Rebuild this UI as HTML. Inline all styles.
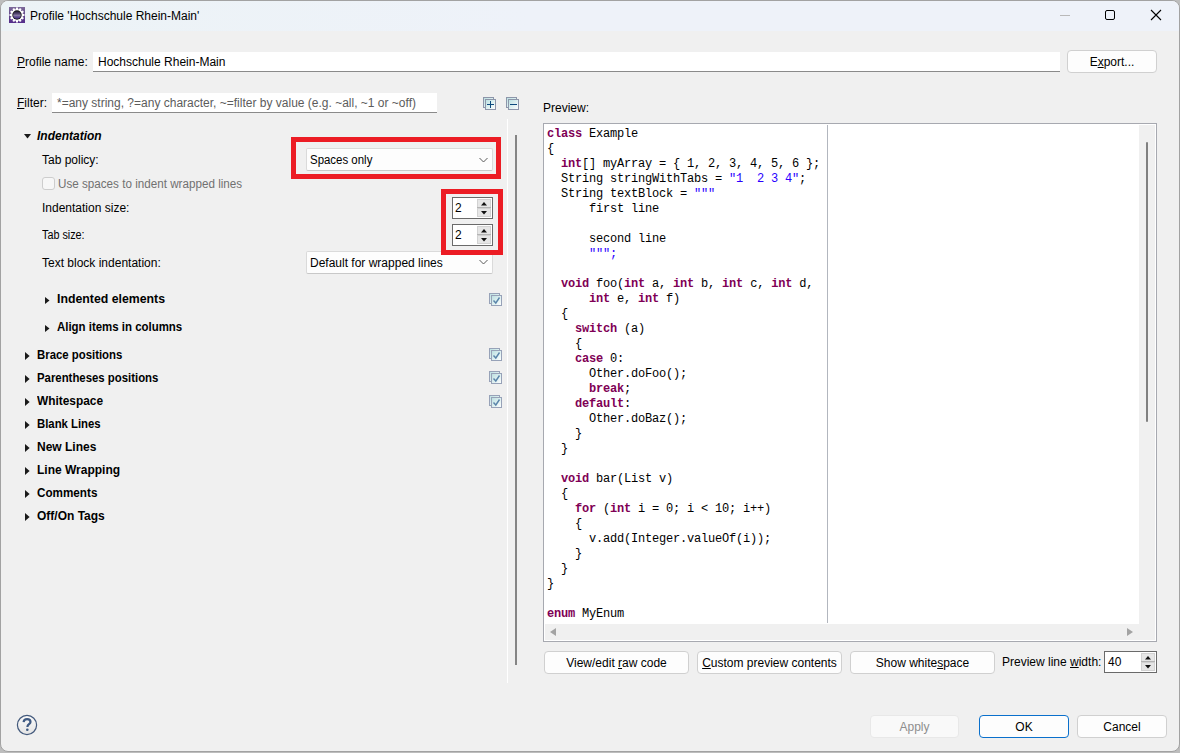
<!DOCTYPE html>
<html><head><meta charset="utf-8">
<style>
*{margin:0;padding:0;box-sizing:border-box}
html,body{width:1180px;height:753px;overflow:hidden;background:#bdbdbd}
body{position:relative;font-family:"Liberation Sans",sans-serif;font-size:12px;color:#000}
.a{position:absolute}
.win{left:0;top:0;width:1180px;height:752px;border:1px solid #a2a2a2;border-radius:8px;background:#f0f0f0;overflow:hidden}
.title{left:0;top:0;width:1178px;height:30px;background:linear-gradient(90deg,#ecf3f6 0%,#eef2f9 45%,#eef2f9 100%)}
.t{position:absolute;white-space:pre;line-height:14px}
.b{font-weight:bold}
.field{position:absolute;background:#fff;border-bottom:1px solid #8a8a8a}
.btn{position:absolute;background:#fdfdfd;border:1px solid #d0d0d0;border-radius:4px;text-align:center;line-height:21px;padding-top:1px}
.combo{position:absolute;background:#fdfdfd;border:1px solid #dadada;border-bottom-color:#c8c8c8;border-radius:2px}
.spin{position:absolute;background:#fff;border:1px solid #6a6a6a}
.red{position:absolute;border:5px solid #ec1c24}
.code{position:absolute;left:547px;top:127px;font-family:"Liberation Mono",monospace;font-size:12px;letter-spacing:-0.2px;line-height:15px;white-space:pre;color:#000}
.k{color:#7f0055;font-weight:bold}
.s{color:#2a00ff}
u{text-decoration:underline;text-decoration-thickness:1px;text-underline-offset:1px}
</style></head><body>
<div class="a win">
  <div class="a title"></div>
</div>

<!-- title -->
<svg class="a" style="left:9px;top:7px" width="16" height="16" viewBox="0 0 16 16">
  <defs><linearGradient id="pg" x1="0" y1="0" x2="0" y2="1"><stop offset="0" stop-color="#7d6a9a"/><stop offset="0.5" stop-color="#5f4488"/><stop offset="1" stop-color="#552d8c"/></linearGradient>
  <linearGradient id="ig" x1="0" y1="0" x2="0" y2="1"><stop offset="0" stop-color="#241c36"/><stop offset="0.35" stop-color="#564872"/><stop offset="0.55" stop-color="#8a7ca4"/><stop offset="0.75" stop-color="#5c4a90"/><stop offset="1" stop-color="#4a3088"/></linearGradient></defs>
  <rect x="0" y="0" width="16" height="16" fill="url(#pg)"/>
  <polygon fill="#fff" points="6.77,2.23 7.09,0.56 8.91,0.56 9.23,2.23 9.82,2.39 10.93,1.10 12.51,2.01 11.95,3.62 12.38,4.05 13.99,3.49 14.90,5.07 13.61,6.18 13.77,6.77 15.44,7.09 15.44,8.91 13.77,9.23 13.61,9.82 14.90,10.93 13.99,12.51 12.38,11.95 11.95,12.38 12.51,13.99 10.93,14.90 9.82,13.61 9.23,13.77 8.91,15.44 7.09,15.44 6.77,13.77 6.18,13.61 5.07,14.90 3.49,13.99 4.05,12.38 3.62,11.95 2.01,12.51 1.10,10.93 2.39,9.82 2.23,9.23 0.56,8.91 0.56,7.09 2.23,6.77 2.39,6.18 1.10,5.07 2.01,3.49 3.62,4.05 4.05,3.62 3.49,2.01 5.07,1.10 6.18,2.39"/>
  <circle cx="8" cy="8" r="4.7" fill="#161616"/>
  <circle cx="8" cy="8" r="3.8" fill="url(#ig)"/>
</svg>
<div class="t" style="left:30px;top:9px">Profile 'Hochschule Rhein-Main'</div>
<div class="a" style="left:1060px;top:15px;width:10px;height:1px;background:#b9b9b9"></div>
<div class="a" style="left:1105px;top:10px;width:10px;height:10px;border:1px solid #000;border-radius:2px"></div>
<svg class="a" style="left:1150px;top:9px" width="12" height="12" viewBox="0 0 12 12"><path d="M1 1L11 11M11 1L1 11" stroke="#000" stroke-width="1.1"/></svg>

<!-- profile name -->
<div class="t" style="left:17px;top:55px"><u>P</u>rofile name:</div>
<div class="field" style="left:93px;top:52px;width:967px;height:20px"></div>
<div class="t" style="left:98px;top:55px">Hochschule Rhein-Main</div>
<div class="btn" style="left:1067px;top:50px;width:90px;height:23px">E<u>x</u>port...</div>

<!-- filter -->
<div class="t" style="left:17px;top:96px"><u>F</u>ilter:</div>
<div class="field" style="left:52px;top:93px;width:385px;height:20px"></div>
<div class="t" style="left:57px;top:96px;color:#5c5c5c">*=any string, ?=any character, ~=filter by value (e.g. ~all, ~1 or ~off)</div>

<svg class="a" style="left:483px;top:97px" width="14" height="14" viewBox="0 0 14 14">
  <defs><linearGradient id="cg" x1="0" y1="0" x2="1" y2="1"><stop offset="0" stop-color="#b9dfe0"/><stop offset="1" stop-color="#ffffff"/></linearGradient></defs>
  <rect x="0.5" y="0.5" width="10" height="10" fill="url(#cg)" stroke="#8d96aa"/>
  <rect x="2.5" y="2.5" width="10" height="10" fill="url(#cg)" stroke="#8d96aa"/>
  <path d="M4 7.5h7M7.5 4v7" stroke="#0d4a7e" stroke-width="1"/>
</svg>
<svg class="a" style="left:506px;top:97px" width="14" height="14" viewBox="0 0 14 14">
  <rect x="0.5" y="0.5" width="10" height="10" fill="url(#cg)" stroke="#8d96aa"/>
  <rect x="2.5" y="2.5" width="10" height="10" fill="url(#cg)" stroke="#8d96aa"/>
  <path d="M4 7.5h7" stroke="#0d4a7e" stroke-width="1"/>
</svg>

<!-- left tree -->
<svg class="a" style="left:24px;top:134px" width="8" height="5"><path d="M0 0H7L3.5 4.5Z" fill="#1a1a1a"/></svg>
<div class="t b" style="left:37px;top:129px;font-style:italic">Indentation</div>
<div class="t" style="left:42px;top:153px">Tab policy:</div>
<div class="a" style="left:42px;top:177px;width:13px;height:13px;border:1px solid #cdcdcd;border-radius:3px;background:#f7f7f7"></div>
<div class="t" style="left:58px;top:177px;color:#717171;transform:scaleX(0.972);transform-origin:0 0">Use spaces to indent wrapped lines</div>
<div class="t" style="left:42px;top:201px">Indentation size:</div>
<div class="t" style="left:42px;top:228px;transform:scaleX(0.9);transform-origin:0 0">Tab size:</div>
<div class="t" style="left:42px;top:256px">Text block indentation:</div>

<div class="combo" style="left:306px;top:148px;width:187px;height:23px"></div>
<div class="t" style="left:310px;top:153px;transform:scaleX(0.954);transform-origin:0 0">Spaces only</div>
<svg class="a" style="left:479px;top:157px" width="10" height="7"><path d="M0.5 1L4.5 5L8.5 1" stroke="#5a5a5a" fill="none"/></svg>

<div class="spin" style="left:452px;top:197px;width:41px;height:22px"></div>
<div class="t" style="left:455px;top:201px">2</div><div class="a" style="left:477px;top:199px;width:14px;height:9px;background:#e6e6e6;border:1px solid #d2d2d2"></div><div class="a" style="left:477px;top:208px;width:14px;height:9px;background:#e6e6e6;border:1px solid #d2d2d2"></div><div class="a" style="left:477px;top:207px;width:14px;height:1px;background:#b4b4b4"></div><svg class="a" style="left:481px;top:202px" width="7" height="4"><path d="M0 3.5H6L3 0Z" fill="#111"/></svg><svg class="a" style="left:481px;top:211px" width="7" height="4"><path d="M0 0H6L3 3.5Z" fill="#111"/></svg>
<div class="spin" style="left:452px;top:224px;width:41px;height:22px"></div>
<div class="t" style="left:455px;top:228px">2</div><div class="a" style="left:477px;top:226px;width:14px;height:9px;background:#e6e6e6;border:1px solid #d2d2d2"></div><div class="a" style="left:477px;top:235px;width:14px;height:9px;background:#e6e6e6;border:1px solid #d2d2d2"></div><div class="a" style="left:477px;top:234px;width:14px;height:1px;background:#b4b4b4"></div><svg class="a" style="left:481px;top:229px" width="7" height="4"><path d="M0 3.5H6L3 0Z" fill="#111"/></svg><svg class="a" style="left:481px;top:238px" width="7" height="4"><path d="M0 0H6L3 3.5Z" fill="#111"/></svg>

<div class="combo" style="left:306px;top:251px;width:187px;height:23px"></div>
<div class="t" style="left:310px;top:256px">Default for wrapped lines</div>
<svg class="a" style="left:479px;top:259px" width="10" height="7"><path d="M0.5 1L4.5 5L8.5 1" stroke="#5a5a5a" fill="none"/></svg>

<div class="red" style="left:291px;top:137px;width:210px;height:42px"></div>
<div class="red" style="left:441px;top:189px;width:62px;height:66px"></div>

<svg class="a" style="left:45px;top:297px" width="5" height="8"><path d="M0 0V7L4.5 3.5Z" fill="#1a1a1a"/></svg>
<div class="t b" style="left:57px;top:292px;transform:scaleX(1.025);transform-origin:0 0">Indented elements</div>
<svg class="a" style="left:45px;top:325px" width="5" height="8"><path d="M0 0V7L4.5 3.5Z" fill="#1a1a1a"/></svg>
<div class="t b" style="left:57px;top:320px;transform:scaleX(0.953);transform-origin:0 0">Align items in columns</div>

<svg class="a" style="left:25px;top:352px" width="6" height="9"><path d="M0 0V8L4.6 4Z" fill="#1a1a1a"/></svg>
<div class="t b" style="left:37px;top:348px;transform:scaleX(0.948);transform-origin:0 0">Brace positions</div>
<svg class="a" style="left:25px;top:375px" width="6" height="9"><path d="M0 0V8L4.6 4Z" fill="#1a1a1a"/></svg>
<div class="t b" style="left:37px;top:371px;transform:scaleX(0.948);transform-origin:0 0">Parentheses positions</div>
<svg class="a" style="left:25px;top:398px" width="6" height="9"><path d="M0 0V8L4.6 4Z" fill="#1a1a1a"/></svg>
<div class="t b" style="left:37px;top:394px;transform:scaleX(0.99);transform-origin:0 0">Whitespace</div>
<svg class="a" style="left:25px;top:421px" width="6" height="9"><path d="M0 0V8L4.6 4Z" fill="#1a1a1a"/></svg>
<div class="t b" style="left:37px;top:417px;transform:scaleX(0.945);transform-origin:0 0">Blank Lines</div>
<svg class="a" style="left:25px;top:444px" width="6" height="9"><path d="M0 0V8L4.6 4Z" fill="#1a1a1a"/></svg>
<div class="t b" style="left:37px;top:440px">New Lines</div>
<svg class="a" style="left:25px;top:467px" width="6" height="9"><path d="M0 0V8L4.6 4Z" fill="#1a1a1a"/></svg>
<div class="t b" style="left:37px;top:463px">Line Wrapping</div>
<svg class="a" style="left:25px;top:490px" width="6" height="9"><path d="M0 0V8L4.6 4Z" fill="#1a1a1a"/></svg>
<div class="t b" style="left:37px;top:486px;transform:scaleX(0.974);transform-origin:0 0">Comments</div>
<svg class="a" style="left:25px;top:513px" width="6" height="9"><path d="M0 0V8L4.6 4Z" fill="#1a1a1a"/></svg>
<div class="t b" style="left:37px;top:509px">Off/On Tags</div>
<svg class="a" style="left:489px;top:293px" width="14" height="14" viewBox="0 0 14 14"><rect x="0.5" y="0.5" width="10" height="10" fill="url(#cg)" stroke="#97a2b8"/><rect x="2.5" y="2.5" width="10" height="10" fill="url(#cg)" stroke="#97a2b8"/><path d="M4.5 7.5L6.8 10L10.5 4.5" stroke="#5a85aa" stroke-width="1.4" fill="none"/></svg>
<svg class="a" style="left:489px;top:348px" width="14" height="14" viewBox="0 0 14 14"><rect x="0.5" y="0.5" width="10" height="10" fill="url(#cg)" stroke="#97a2b8"/><rect x="2.5" y="2.5" width="10" height="10" fill="url(#cg)" stroke="#97a2b8"/><path d="M4.5 7.5L6.8 10L10.5 4.5" stroke="#5a85aa" stroke-width="1.4" fill="none"/></svg>
<svg class="a" style="left:489px;top:371px" width="14" height="14" viewBox="0 0 14 14"><rect x="0.5" y="0.5" width="10" height="10" fill="url(#cg)" stroke="#97a2b8"/><rect x="2.5" y="2.5" width="10" height="10" fill="url(#cg)" stroke="#97a2b8"/><path d="M4.5 7.5L6.8 10L10.5 4.5" stroke="#5a85aa" stroke-width="1.4" fill="none"/></svg>
<svg class="a" style="left:489px;top:395px" width="14" height="14" viewBox="0 0 14 14"><rect x="0.5" y="0.5" width="10" height="10" fill="url(#cg)" stroke="#97a2b8"/><rect x="2.5" y="2.5" width="10" height="10" fill="url(#cg)" stroke="#97a2b8"/><path d="M4.5 7.5L6.8 10L10.5 4.5" stroke="#5a85aa" stroke-width="1.4" fill="none"/></svg>

<!-- sash + scroll -->
<div class="a" style="left:507px;top:119px;width:1px;height:564px;background:#ffffff"></div>
<div class="a" style="left:515px;top:135px;width:2px;height:530px;background:#858585"></div>

<!-- preview -->
<div class="t" style="left:543px;top:101px">Preview:</div>
<div class="a" style="left:543px;top:123px;width:614px;height:519px;border:1px solid #a7a9b0;background:#fff"></div>
<div class="a" style="left:827px;top:125px;width:1px;height:498px;background:#b2b6be"></div>
<div class="a" style="left:1139px;top:125px;width:16px;height:515px;background:#f0f0f0"></div>
<div class="a" style="left:545px;top:624px;width:610px;height:16px;background:#f0f0f0"></div>
<div class="a" style="left:1146px;top:142px;width:2px;height:280px;background:#808080;border-radius:1px"></div>
<svg class="a" style="left:550px;top:628px" width="7" height="9"><path d="M6 0V8L0 4Z" fill="#a3a3a3"/></svg>
<svg class="a" style="left:1127px;top:628px" width="7" height="9"><path d="M0 0V8L6 4Z" fill="#a3a3a3"/></svg>

<div class="code"><span class="k">class</span> Example
{
  <span class="k">int</span>[] myArray = { 1, 2, 3, 4, 5, 6 };
  String stringWithTabs = <span class="s">"1  2 3 4"</span>;
  String textBlock = <span class="s">"""</span>
      first line

      second line
      <span class="s">""";</span>

  <span class="k">void</span> foo(<span class="k">int</span> a, <span class="k">int</span> b, <span class="k">int</span> c, <span class="k">int</span> d,
      <span class="k">int</span> e, <span class="k">int</span> f)
  {
    <span class="k">switch</span> (a)
    {
    <span class="k">case</span> 0:
      Other.doFoo();
      <span class="k">break</span>;
    <span class="k">default</span>:
      Other.doBaz();
    }
  }

  <span class="k">void</span> bar(List v)
  {
    <span class="k">for</span> (<span class="k">int</span> i = 0; i &lt; 10; i++)
    {
      v.add(Integer.valueOf(i));
    }
  }
}

<span class="k">enum</span> MyEnum</div>

<div class="btn" style="left:544px;top:651px;width:145px;height:23px">View/edit <u>r</u>aw code</div>
<div class="btn" style="left:697px;top:651px;width:145px;height:23px"><u>C</u>ustom preview contents</div>
<div class="btn" style="left:850px;top:651px;width:145px;height:23px">Show white<u>s</u>pace</div>
<div class="t" style="left:1002px;top:655px">Preview line <u>w</u>idth:</div>
<div class="spin" style="left:1104px;top:651px;width:53px;height:22px"></div>
<div class="t" style="left:1108px;top:655px">40</div><div class="a" style="left:1141px;top:653px;width:14px;height:9px;background:#e6e6e6;border:1px solid #d2d2d2"></div><div class="a" style="left:1141px;top:662px;width:14px;height:9px;background:#e6e6e6;border:1px solid #d2d2d2"></div><div class="a" style="left:1141px;top:661px;width:14px;height:1px;background:#b4b4b4"></div><svg class="a" style="left:1145px;top:656px" width="7" height="4"><path d="M0 3.5H6L3 0Z" fill="#111"/></svg><svg class="a" style="left:1145px;top:665px" width="7" height="4"><path d="M0 0H6L3 3.5Z" fill="#111"/></svg>

<!-- bottom -->
<svg class="a" style="left:16px;top:714px" width="22" height="22" viewBox="0 0 22 22">
  <defs><linearGradient id="hg" x1="0" y1="0" x2="0" y2="1"><stop offset="0" stop-color="#fafafa"/><stop offset="1" stop-color="#e4e4e4"/></linearGradient></defs>
  <circle cx="11" cy="11" r="9.6" fill="url(#hg)" stroke="#43597c" stroke-width="1.2"/>
  <path d="M7.6 8.2C7.8 6.2 9.2 5.2 11.1 5.2C13.2 5.2 14.5 6.4 14.5 8C14.5 9.9 12 10.3 11.5 12.2V13" stroke="#3f5a82" stroke-width="2.2" fill="none"/>
  <circle cx="11.3" cy="15.8" r="1.3" fill="#3f5a82"/>
</svg>
<div class="btn" style="left:870px;top:715px;width:89px;height:23px;color:#8e8e8e;background:#f9f9f9;border-color:#e8e8e8">Apply</div>
<div class="btn" style="left:979px;top:715px;width:90px;height:23px;border-color:#0a70cc">OK</div>
<div class="btn" style="left:1077px;top:715px;width:90px;height:23px">Cancel</div>
</body></html>
